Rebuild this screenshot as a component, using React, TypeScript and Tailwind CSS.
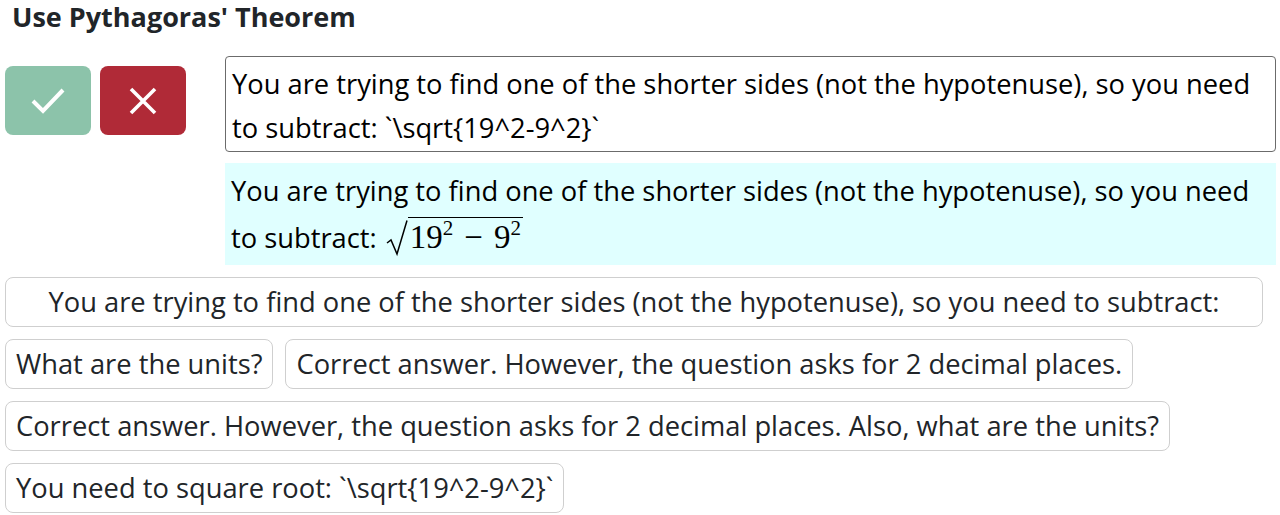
import React from 'react';

const feedback = [
  'What are the units?',
  'Correct answer. However, the question asks for 2 decimal places.',
  'Correct answer. However, the question asks for 2 decimal places. Also, what are the units?',
  'You need to square root: `\\sqrt{19^2-9^2}`',
];

const Sqrt: React.FC = () => (
  <span className="inline-flex items-end mt-[4px] ml-[2px] font-['Liberation_Serif',serif] text-[33px] leading-none align-[-9px]">
    <svg width="22" height="38" viewBox="0 0 22 38" className="mb-[-3px]">
      <path d="M1 24 L5 21 L11 35 L21 1.5" fill="none" stroke="#000" strokeWidth="1.5" />
    </svg>
    <span className="border-t-[1.5px] border-black pt-[3px] pl-[2px] pr-[2px]">
      19<sup className="text-[21px] relative top-[-13px]">2</sup>
      <span className="mx-[11px]">−</span>
      9<sup className="text-[21px] relative top-[-13px]">2</sup>
    </span>
  </span>
);

export default function App() {
  return (
    <div className="font-['Open_Sans',sans-serif] text-[#212529] text-[27.3px]">
      <h5 className="pl-[12px] pt-[1px] font-bold text-[27px] leading-[32px] h-[56px]">Use Pythagoras' Theorem</h5>

      <div className="flex">
        <div className="flex gap-[9px] pl-[5px] pt-[10px]">
          <button className="w-[86px] h-[69px] rounded-[8px] bg-[#8cc3aa] flex items-center justify-center">
            <svg width="34" height="26" viewBox="0 0 34 26">
              <path d="M2 13 L12 23 L32 2" fill="none" stroke="#fff" strokeWidth="4" />
            </svg>
          </button>
          <button className="w-[86px] h-[69px] rounded-[8px] bg-[#b02a37] flex items-center justify-center">
            <svg width="28" height="28" viewBox="0 0 28 28">
              <path d="M2 2 L26 26 M26 2 L2 26" fill="none" stroke="#fff" strokeWidth="3.6" />
            </svg>
          </button>
        </div>

        <div className="ml-[39px] w-[1051px] flex flex-col gap-[11px]">
          <div className="border border-[#6b6b6b] rounded-[4px] px-[6px] pt-[5px] pb-[1px] leading-[44px] text-black">
            You are trying to find one of the shorter sides (not the hypotenuse), so you need to subtract: `\sqrt{'{'}19^2-9^2{'}'}`
          </div>
          <div className="bg-[#e0ffff] px-[6px] pt-[6px] pb-[5px] leading-[44px] text-black">
            You are trying to find one of the shorter sides (not the hypotenuse), so you need to subtract: <Sqrt />
          </div>
        </div>
      </div>

      <div className="mt-[12px] px-[5px] flex flex-col gap-[12px]">
        <button className="w-[1258px] bg-white border border-[#cfcfcf] rounded-[8px] py-[6px] leading-[36px] text-center">
          You are trying to find one of the shorter sides (not the hypotenuse), so you need to subtract:
        </button>
        <div className="flex flex-wrap gap-[12px] w-[1270px]">
          {feedback.map((f) => (
            <button
              key={f}
              className="bg-white border border-[#cfcfcf] rounded-[8px] px-[10px] py-[6px] leading-[36px] text-left"
            >
              {f}
            </button>
          ))}
        </div>
      </div>
    </div>
  );
}
